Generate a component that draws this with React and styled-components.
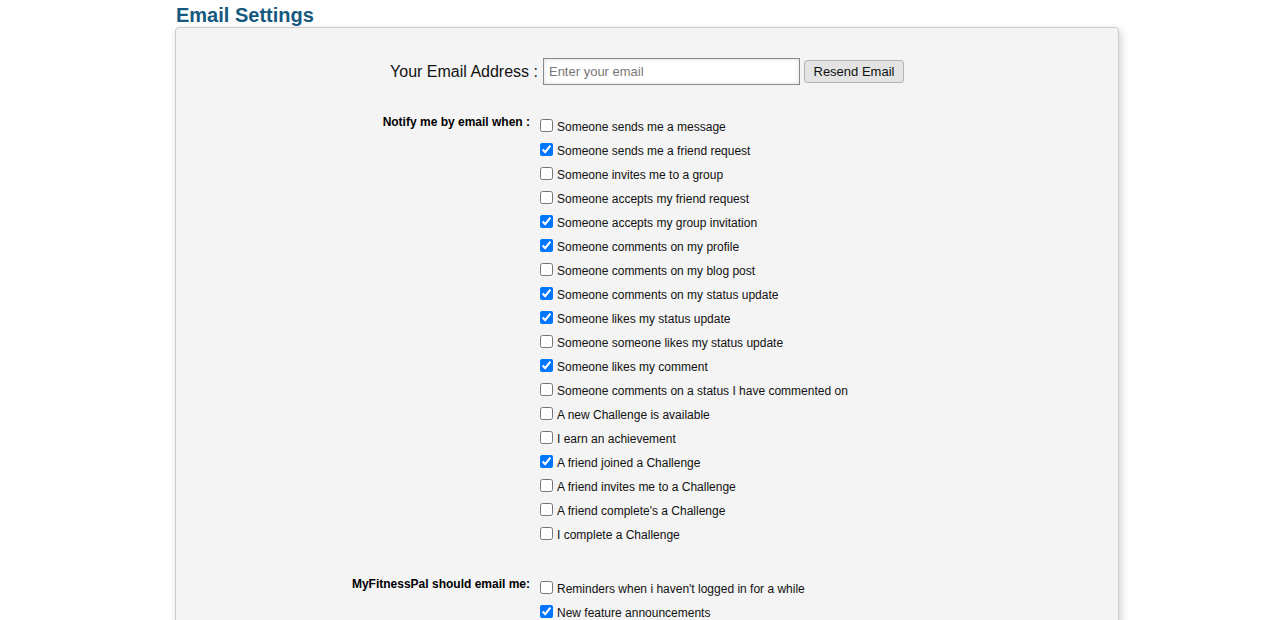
import React from "react";
import styled, { createGlobalStyle } from "styled-components";

const GlobalStyle = createGlobalStyle`
  html, body {
    margin: 0;
    padding: 0;
    background: #ffffff;
    font-family: "Liberation Sans", Arial, sans-serif;
    color: #000;
  }
`;

const notifyItems = [
  ["Someone sends me a message", false],
  ["Someone sends me a friend request", true],
  ["Someone invites me to a group", false],
  ["Someone accepts my friend request", false],
  ["Someone accepts my group invitation", true],
  ["Someone comments on my profile", true],
  ["Someone comments on my blog post", false],
  ["Someone comments on my status update", true],
  ["Someone likes my status update", true],
  ["Someone someone likes my status update", false],
  ["Someone likes my comment", true],
  ["Someone comments on a status I have commented on", false],
  ["A new Challenge is available", false],
  ["I earn an achievement", false],
  ["A friend joined a Challenge", true],
  ["A friend invites me to a Challenge", false],
  ["A friend complete's a Challenge", false],
  ["I complete a Challenge", false],
];

const mfpItems = [
  ["Reminders when i haven't logged in for a while", false],
  ["New feature announcements", true],
];

export default function App() {
  return (
    <Page>
      <GlobalStyle />
      <Title>Email Settings</Title>
      <Panel>
        <EmailRow>
          <EmailLabel>Your Email Address :</EmailLabel>
          <EmailInput type="text" placeholder="Enter your email" />
          <ResendButton>Resend Email</ResendButton>
        </EmailRow>

        <Section>
          <SectionLabel>Notify me by email when :</SectionLabel>
          <List>
            {notifyItems.map(([text, on], i) => (
              <Option key={i}>
                <input type="checkbox" defaultChecked={on} />
                <span>{text}</span>
              </Option>
            ))}
          </List>
        </Section>

        <Section $gap>
          <SectionLabel>MyFitnessPal should email me:</SectionLabel>
          <List>
            {mfpItems.map(([text, on], i) => (
              <Option key={i}>
                <input type="checkbox" defaultChecked={on} />
                <span>{text}</span>
              </Option>
            ))}
          </List>
        </Section>
      </Panel>
    </Page>
  );
}

const Page = styled.div`
  padding: 4px 0 40px 175px;
  width: 944px;
`;

const Title = styled.h1`
  margin: 0;
  padding-left: 1px;
  font-size: 20px;
  line-height: 23px;
  font-weight: bold;
  color: #17587f;
`;

const Panel = styled.div`
  background: #f4f4f4;
  border: 1px solid #cccccc;
  border-radius: 4px;
  box-shadow: 2px 3px 8px rgba(0, 0, 0, 0.18);
  padding: 30px 0 40px;
`;

const EmailRow = styled.div`
  display: flex;
  justify-content: center;
  align-items: center;
  height: 27px;
  gap: 4px;
`;

const EmailLabel = styled.label`
  font-size: 16px;
  color: #111;
  margin-right: 1px;
`;

const EmailInput = styled.input`
  box-sizing: border-box;
  width: 257px;
  height: 27px;
  border: 1px solid #8a8a8a;
  box-shadow: inset 0 0 4px rgba(0, 0, 0, 0.15);
  background: #fff;
  padding: 0 5px;
  font-family: "Liberation Sans", Arial, sans-serif;
  font-size: 13px;
  outline: none;
  &::placeholder {
    color: #777;
  }
`;

const ResendButton = styled.button`
  box-sizing: border-box;
  width: 100px;
  height: 23px;
  background: #e3e3e3;
  border: 1px solid #b5b5b5;
  border-radius: 3px;
  font-family: "Liberation Sans", Arial, sans-serif;
  font-size: 13px;
  color: #111;
  padding: 0;
`;

const Section = styled.div`
  display: grid;
  grid-template-columns: 360px 1fr;
  margin-top: ${(p) => (p.$gap ? "30px" : "29px")};
`;

const SectionLabel = styled.div`
  text-align: right;
  padding-right: 6px;
  padding-top: 1px;
  font-size: 12px;
  line-height: 14px;
  font-weight: bold;
`;

const List = styled.div`
  display: flex;
  flex-direction: column;
`;

const Option = styled.label`
  display: flex;
  align-items: center;
  height: 24px;
  font-size: 12px;
  color: #111;
  input {
    width: 13px;
    height: 13px;
    margin: 0 4px 0 4px;
    transform: translateY(-1px);
  }
  span {
    line-height: 14px;
    padding-top: 2px;
  }
`;
